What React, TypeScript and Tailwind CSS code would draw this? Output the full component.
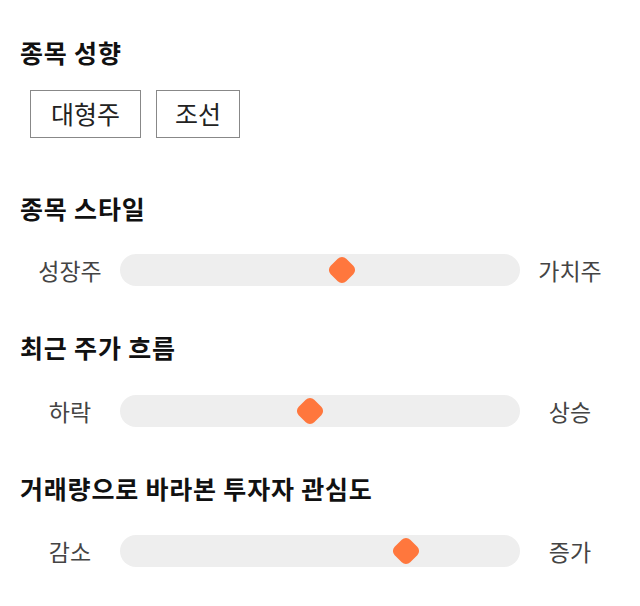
const font = { fontFamily: '"Noto Sans CJK KR", "Noto Sans", sans-serif' };

interface SliderRowProps {
  left: string;
  right: string;
  value: number;
}

function SliderRow({ left, right, value }: SliderRowProps) {
  return (
    <div className="grid grid-cols-[100px_1fr_100px] items-center h-8">
      <span className="text-center text-[23px] leading-8 text-[#444]">{left}</span>
      <div className="relative h-8 rounded-full bg-[#eeeeee]">
        <div
          className="absolute top-1/2 w-[22px] h-[22px] -translate-x-1/2 -translate-y-1/2 rotate-45 rounded-[6px] bg-[#ff773d]"
          style={{ left: `${value}%` }}
        />
      </div>
      <span className="text-center text-[23px] leading-8 text-[#444]">{right}</span>
    </div>
  );
}

function Title({ children }: { children: React.ReactNode }) {
  return (
    <h3 className="text-[25px] leading-[30px] font-bold tracking-[0.8px] text-[#111]">
      {children}
    </h3>
  );
}

export default function App() {
  return (
    <div className="w-[640px] h-[606px] bg-white px-5 pt-[37px]" style={font}>
      <Title>종목 성향</Title>
      <div className="flex gap-[15px] mt-[23px] ml-[10px]">
        <button className="h-12 px-5 border border-[#888] text-[25px] text-[#222]">대형주</button>
        <button className="h-12 px-[18px] border border-[#888] text-[25px] text-[#222]">조선</button>
      </div>

      <div className="mt-[55px]">
        <Title>종목 스타일</Title>
      </div>
      <div className="mt-[31px]">
        <SliderRow left="성장주" right="가치주" value={55.6} />
      </div>

      <div className="mt-[46px]">
        <Title>최근 주가 흐름</Title>
      </div>
      <div className="mt-[33px]">
        <SliderRow left="하락" right="상승" value={47.6} />
      </div>

      <div className="mt-[46px]">
        <Title>거래량으로 바라본 투자자 관심도</Title>
      </div>
      <div className="mt-[32px]">
        <SliderRow left="감소" right="증가" value={71.4} />
      </div>
    </div>
  );
}
